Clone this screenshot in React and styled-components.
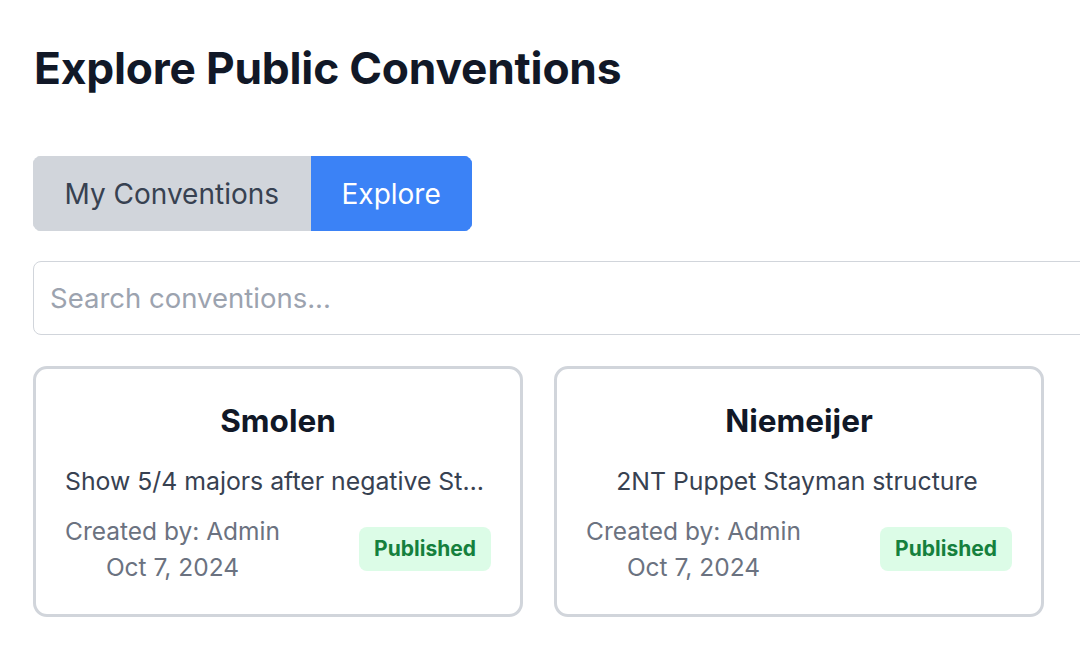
import React from "react";
import styled, { createGlobalStyle } from "styled-components";

const Global = createGlobalStyle`
  html, body { margin: 0; padding: 0; background: #ffffff; overflow: hidden; }
  body { font-family: Inter, "Noto Sans", sans-serif; color: #111827; }
  * { box-sizing: border-box; }
`;

const Page = styled.main`
  width: 1120px;
  padding: 40px 0 0 33px;
  display: flex;
  flex-direction: column;
`;

const Title = styled.h1`
  margin: 0 0 60px 1px;
  font-size: 44.3px;
  font-weight: 700;
  line-height: 56px;
  color: #111827;
  letter-spacing: -0.2px;
`;

const Tabs = styled.div`
  display: flex;
  align-self: flex-start;
  border-radius: 8px;
  overflow: hidden;
  margin-bottom: 30px;
`;

const Tab = styled.button`
  border: 1px solid ${(p) => (p.$active ? "#3b82f6" : "#d1d5db")};
  background: ${(p) => (p.$active ? "#3b82f6" : "#d1d5db")};
  color: ${(p) => (p.$active ? "#ffffff" : "#374151")};
  font-family: Inter, "Noto Sans", sans-serif;
  font-size: 28px;
  line-height: 36px;
  height: 75px;
  padding: 0 ${(p) => (p.$active ? "30px" : "30.5px")};
  cursor: pointer;
`;

const Search = styled.input`
  width: 1100px;
  height: 74px;
  border: 1.5px solid #d1d5db;
  border-radius: 8px;
  padding: 0 16px;
  font-family: Inter, "Noto Sans", sans-serif;
  font-size: 27.5px;
  color: #111827;
  margin-bottom: 31px;
  outline: none;
  &::placeholder { color: #9ca3af; }
`;

const Grid = styled.div`
  display: grid;
  grid-template-columns: 490px 490px;
  gap: 31px;
`;

const Card = styled.div`
  height: 251px;
  border: 3px solid #d1d5db;
  border-radius: 14px;
  padding: 28px 29px 0 29px;
  display: flex;
  flex-direction: column;
  align-items: center;
`;

const CardTitle = styled.h2`
  margin: 0;
  font-size: 31.5px;
  font-weight: 700;
  line-height: 48px;
  color: #111827;
`;

const Desc = styled.p`
  margin: 18px 0 0;
  width: 100%;
  font-size: 24.8px;
  line-height: 36px;
  color: #374151;
  text-align: center;
  white-space: nowrap;
  overflow: hidden;
  text-overflow: ellipsis;
  padding-right: 4px;
`;

const Footer = styled.div`
  width: 100%;
  margin-top: 14px;
  display: flex;
  align-items: center;
  justify-content: space-between;
`;

const Meta = styled.div`
  text-align: center;
  font-size: 24.5px;
  line-height: 36px;
  color: #6b7280;
`;

const Badge = styled.span`
  background: #dcfce7;
  color: #15803d;
  font-weight: 700;
  font-size: 21px;
  line-height: 28px;
  padding: 8px 15px;
  border-radius: 8px;
`;

const items = [
  { name: "Smolen", desc: "Show 5/4 majors after negative Stayman response" },
  { name: "Niemeijer", desc: "2NT Puppet Stayman structure" },
];

export default function App() {
  return (
    <>
      <Global />
      <Page>
        <Title>Explore Public Conventions</Title>
        <Tabs>
          <Tab>My Conventions</Tab>
          <Tab $active>Explore</Tab>
        </Tabs>
        <Search placeholder="Search conventions..." />
        <Grid>
          {items.map((it) => (
            <Card key={it.name}>
              <CardTitle>{it.name}</CardTitle>
              <Desc>{it.desc}</Desc>
              <Footer>
                <Meta>
                  <div>Created by: Admin</div>
                  <div>Oct 7, 2024</div>
                </Meta>
                <Badge>Published</Badge>
              </Footer>
            </Card>
          ))}
        </Grid>
      </Page>
    </>
  );
}
